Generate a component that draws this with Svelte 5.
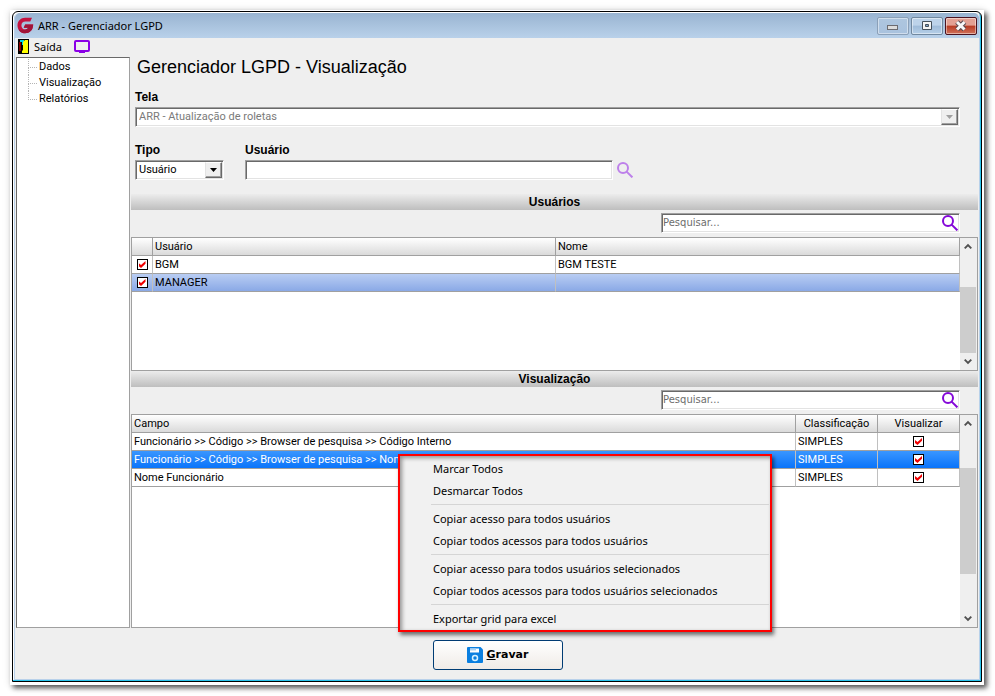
<script lang="ts">
  type Profile = { login: string; name: string; checked: boolean };
  type Field = { path: string; kind: string; visible: boolean };

  const screens = ['ARR - Atualização de roletas'];
  const treeItems = ['Dados', 'Visualização', 'Relatórios'];

  let type = $state('Usuário');
  let userFilter = $state('');
  let selectedUser = $state(1);
  let selectedField = $state(1);

  let users: Profile[] = $state([
    { login: 'BGM', name: 'BGM TESTE', checked: true },
    { login: 'MANAGER', name: '', checked: true },
  ]);

  let fields: Field[] = $state([
    {
      path: 'Funcionário >> Código >> Browser de pesquisa >> Código Interno',
      kind: 'SIMPLES',
      visible: true,
    },
    {
      path: 'Funcionário >> Código >> Browser de pesquisa >> Nome',
      kind: 'SIMPLES',
      visible: true,
    },
    { path: 'Nome Funcionário', kind: 'SIMPLES', visible: true },
  ]);

  const menuGroups = [
    ['Marcar Todos', 'Desmarcar Todos'],
    ['Copiar acesso para todos usuários', 'Copiar todos acessos para todos usuários'],
    [
      'Copiar acesso para todos usuários selecionados',
      'Copiar todos acessos para todos usuários selecionados',
    ],
    ['Exportar grid para excel'],
  ];

  function runMenu(item: string) {
    if (item === 'Marcar Todos') fields.forEach((f) => (f.visible = true));
    if (item === 'Desmarcar Todos') fields.forEach((f) => (f.visible = false));
  }
</script>

{#snippet magnifier()}
  <svg class="magnifier" viewBox="0 0 16 16" aria-hidden="true">
    <circle cx="6" cy="6" r="5" />
    <path d="M9.6 9.6 15.4 15.4" />
  </svg>
{/snippet}

{#snippet scrollbar(name: string)}
  <div class="scrollbar {name}" aria-hidden="true">
    <svg viewBox="0 0 17 17"><path d="M5 10.5 8.5 7 12 10.5" /></svg>
    <span class="before"></span>
    <span class="thumb"></span>
    <span class="after"></span>
    <svg viewBox="0 0 17 17"><path d="M5 6.5 8.5 10 12 6.5" /></svg>
  </div>
{/snippet}

{#snippet search()}
  <div class="search-row">
    <div class="search">
      <input type="text" placeholder="Pesquisar..." aria-label="Pesquisar" />
      <button type="button" aria-label="Buscar">{@render magnifier()}</button>
    </div>
  </div>
{/snippet}

<div class="desktop">
  <div class="frame">
    <div class="window">
      <header class="titlebar">
        <svg class="logo" viewBox="0 0 17 17" aria-hidden="true">
          <path
            d="M15 .8H8C3.800.8.5 4.100.5 8.400S3.700 16.200 8 16.200c4.600 0 7.900-2.700 8.200-8.700H8.200L6.700 10.800h4.500c-.7 1.200-1.700 1.700-3.100 1.700-2.200 0-3.700-1.700-3.700-4s1.600-3.900 3.900-3.900h5z"
            fill="#c4123f"
          />
          <path d="M8.200 7.500h8c-.3 6-3.600 8.700-8.200 8.700-3 0-5.300-1.400-6.600-3.700 4.500 1.200 8.400.4 9.800-1.700H6.700z" fill="#a01438" />
        </svg>
        <span class="caption">ARR - Gerenciador LGPD</span>
        <div class="controls">
          <button type="button" class="dim" aria-label="Minimizar">
            <svg viewBox="0 0 14 12"><rect x="1.500" y="5.500" width="10" height="4" fill="#dcdcdc" stroke="#6b6b70" /></svg>
          </button>
          <button type="button" aria-label="Maximizar">
            <svg viewBox="0 0 14 12"><path d="M2.500 1.500h9v8h-9z" fill="#f4f4f4" stroke="#45505b" /><path d="M5.500 4.500h3v2h-3z" fill="#7ea3c8" stroke="#45505b" /></svg>
          </button>
          <button type="button" class="close" aria-label="Fechar">
            <svg viewBox="0 0 14 12">
              <path d="M3 2 10.500 9.500M10.500 2 3 9.500" stroke="#5a4a50" stroke-width="5" />
              <path d="M3 2 10.500 9.500M10.500 2 3 9.500" stroke="#f8f8f8" stroke-width="3" />
            </svg>
          </button>
        </div>
      </header>

      <nav class="toolbar" aria-label="Ferramentas">
        <button type="button">
          <svg class="door" viewBox="0 0 11 15" aria-hidden="true">
            <rect width="11" height="15" fill="#000" />
            <path d="M1 3h2v9H1z" fill="#8a0000" />
            <path d="M2 1h4v2H5v3H4V3H2z" fill="#00d8e8" />
            <path d="M5 3 7 1h3v13H4v-2l1-1z" fill="#ff0" />
          </svg>
          Saída
        </button>
        <button type="button" aria-label="Tela">
          <svg class="monitor" viewBox="0 0 16 13" aria-hidden="true">
            <rect x="1" y="1" width="14" height="10" rx="1" fill="none" stroke="#8a00e6" stroke-width="2" />
            <path d="M5 12h6" stroke="#8a00e6" stroke-width="2" />
          </svg>
        </button>
      </nav>

      <div class="workspace">
        <aside class="tree">
          <ul>
            {#each treeItems as item}
              <li><a href="#{item}">{item}</a></li>
            {/each}
          </ul>
        </aside>

        <main>
          <div class="form">
            <h1>Gerenciador LGPD - Visualização</h1>

            <label class="field-label" for="screen">Tela</label>
            <div class="combo">
              <select id="screen" disabled>
                {#each screens as screen}
                  <option>{screen}</option>
                {/each}
              </select>
              <span class="drop"><svg viewBox="0 0 7 4"><path d="M0 0h7L3.500 4z" /></svg></span>
            </div>

            <div class="filters">
              <div class="type">
                <label class="field-label" for="type">Tipo</label>
                <div class="combo">
                  <select id="type" bind:value={type}>
                    <option>Usuário</option>
                    <option>Grupo</option>
                  </select>
                  <span class="drop"><svg viewBox="0 0 7 4"><path d="M0 0h7L3.500 4z" /></svg></span>
                </div>
              </div>
              <div class="user">
                <label class="field-label" for="user">Usuário</label>
                <div class="user-row">
                  <input id="user" type="text" bind:value={userFilter} />
                  <button type="button" aria-label="Pesquisar usuário">{@render magnifier()}</button>
                </div>
              </div>
            </div>
          </div>

          <h2>Usuários</h2>
          {@render search()}
          <section class="grid users">
            <div class="sheet">
              <table>
                <thead>
                  <tr>
                    <th class="tick" aria-label="Selecionado"></th>
                    <th class="login">Usuário</th>
                    <th>Nome</th>
                  </tr>
                </thead>
                <tbody>
                  {#each users as user, i}
                    <tr class:marked={i === selectedUser} onclick={() => (selectedUser = i)}>
                      <td class="tick">
                        <input type="checkbox" aria-label={user.login} bind:checked={user.checked} />
                      </td>
                      <td>{user.login}</td>
                      <td>{user.name}</td>
                    </tr>
                  {/each}
                </tbody>
              </table>
            </div>
            {@render scrollbar('lower')}
          </section>

          <h2>Visualização</h2>
          {@render search()}
          <section class="grid fields">
            <div class="sheet">
              <table>
                <thead>
                  <tr>
                    <th>Campo</th>
                    <th class="narrow">Classificação</th>
                    <th class="narrow">Visualizar</th>
                  </tr>
                </thead>
                <tbody>
                  {#each fields as field, i}
                    <tr class:active={i === selectedField} onclick={() => (selectedField = i)}>
                      <td>{field.path}</td>
                      <td>{field.kind}</td>
                      <td class="tick">
                        <input type="checkbox" aria-label="Visualizar {field.path}" bind:checked={field.visible} />
                      </td>
                    </tr>
                  {/each}
                </tbody>
              </table>
            </div>
            {@render scrollbar('middle')}

            <div class="menu" role="menu">
              {#each menuGroups as group}
                <div class="group" role="group">
                  {#each group as item}
                    <button type="button" role="menuitem" onclick={() => runMenu(item)}>{item}</button>
                  {/each}
                </div>
              {/each}
            </div>
          </section>
        </main>
      </div>

      <footer>
        <button type="button" class="save">
          <svg viewBox="0 0 16 16" aria-hidden="true">
            <path d="M0 1q0-1 1-1h12.500L16 2.500V15q0 1-1 1H1q-1 0-1-1z" fill="#0b7fe0" />
            <path d="M3 1.500h9v4H3z" fill="#fff" />
            <path d="M3 1.500h6v2H3z" fill="#a9d2f5" />
            <circle cx="8" cy="11" r="2.500" fill="none" stroke="#d8f2ff" stroke-width="1.500" />
          </svg>
          <span><u>G</u>ravar</span>
        </button>
      </footer>
    </div>
  </div>
</div>

<style>
  :global(body) {
    margin: 0;
    background: #fff;
  }

  .desktop {
    box-sizing: border-box;
    display: flex;
    min-height: 100vh;
    padding: 10px 11px 11px 10px;
    color: #000;
    font: 11px/16px Roboto, 'Liberation Sans', sans-serif;
  }

  .desktop * {
    box-sizing: border-box;
  }

  button,
  input,
  select {
    margin: 0;
    padding: 0;
    border: 0;
    background: none;
    color: inherit;
    font: inherit;
  }

  .frame {
    display: flex;
    flex: 1;
    padding: 1px 2px 3px;
    background: #fff;
    box-shadow:
      0 0 8px rgb(0 0 0 / 12%),
      3px 3px 5px rgb(0 0 0 / 65%);
  }

  .window {
    display: flex;
    flex: 1;
    flex-direction: column;
    min-width: 0;
    padding: 0 1px 1px 2px;
    background: #efefef;
    border: 1px solid #000;
    border-radius: 6px 6px 0 0;
    box-shadow:
      inset -1px -1px #28c4ec,
      inset 1px 1px #fff,
      inset -2px -2px #b9d1ea,
      inset 2px 0 #b9d1ea;
  }

  .titlebar {
    display: flex;
    gap: 4px;
    align-items: center;
    height: 25px;
    margin: 1px 1px 0 0;
    padding: 0 2px;
    background: linear-gradient(#99b4d1, #b9d1ea);
    border-radius: 5px 5px 0 0;
  }

  .logo {
    width: 17px;
    height: 17px;
  }

  .caption,
  .toolbar,
  .menu {
    font-family: 'Noto Sans', 'Open Sans', sans-serif;
  }

  .controls {
    display: flex;
    gap: 2px;
    margin-left: auto;
  }

  .controls button {
    display: grid;
    place-items: center;
    width: 32px;
    height: 18px;
    background: linear-gradient(#bdd3ea 45%, #9fbbd9 50%, #b6cfe8);
    border: 1px solid #71889f;
    border-radius: 2px;
    box-shadow: inset 0 0 0 1px rgb(255 255 255 / 45%);
  }

  .controls svg {
    width: 14px;
    height: 12px;
  }

  .controls .dim {
    background: linear-gradient(#aec6df, #a9c2de);
    border-color: #8ba0b8;
  }

  .controls .close {
    background: linear-gradient(#e3a093 45%, #b83a22 50%, #d0725c);
    border-color: #4b1220;
  }

  .toolbar {
    display: flex;
    gap: 12px;
    align-items: center;
    height: 19px;
    padding: 0 3px 2px;
  }

  .toolbar button {
    display: flex;
    gap: 5px;
    align-items: center;
  }

  .door {
    width: 11px;
    height: 15px;
  }

  .monitor {
    width: 16px;
    height: 13px;
  }

  .workspace {
    display: flex;
    flex: 1;
    gap: 1px;
    padding: 0 2px 0 1px;
  }

  .tree {
    flex: none;
    width: 114px;
    background: #fff;
    border: 1px solid #a0a0a0;
    border-color: #696969 #a0a0a0 #a0a0a0 #696969;
  }

  .tree ul {
    margin: 1px 0 0 11px;
    padding: 0;
    list-style: none;
  }

  .tree li {
    position: relative;
    padding-left: 11px;
  }

  .tree li::before {
    position: absolute;
    top: 0;
    left: 0;
    width: 8px;
    height: 8px;
    border: dotted #b4b4b4;
    border-width: 0 0 1px 1px;
    content: '';
  }

  .tree li:not(:last-child)::after {
    position: absolute;
    top: 8px;
    left: 0;
    height: 8px;
    border-left: 1px dotted #b4b4b4;
    content: '';
  }

  .tree a {
    color: inherit;
    text-decoration: none;
  }

  main {
    display: flex;
    flex: 1;
    flex-direction: column;
    min-width: 0;
  }

  h1,
  h2,
  .field-label {
    font-family: 'Liberation Sans', Arial, sans-serif;
  }

  .form {
    padding: 0 18px 14px 4px;
  }

  h1 {
    margin: 0 0 12px;
    padding-left: 2px;
    font-size: 18px;
    font-weight: 400;
    line-height: 20px;
  }

  .field-label {
    display: block;
    height: 18px;
    font-size: 12px;
    font-weight: 700;
  }

  .combo,
  .user input,
  .search {
    height: 20px;
    padding: 1px;
    background: #fff;
    border: 1px solid #a0a0a0;
    border-color: #a0a0a0 #fff #fff #a0a0a0;
    box-shadow:
      inset 1px 1px #696969,
      inset -1px -1px #e3e3e3;
  }

  .combo {
    display: flex;
  }

  .combo select {
    flex: 1;
    min-width: 0;
    padding-left: 2px;
    appearance: none;
    opacity: 1;
  }

  .combo select:disabled {
    color: #7a7a7a;
  }

  .drop {
    display: grid;
    flex: none;
    place-items: center;
    width: 17px;
    background: #efefef;
    border: 1px solid #fff;
    border-color: #fff #696969 #696969 #e3e3e3;
    box-shadow: inset -1px -1px #a0a0a0;
    pointer-events: none;
  }

  .drop svg {
    width: 7px;
    height: 4px;
  }

  select:disabled + .drop {
    fill: #a0a0a0;
  }

  .filters {
    display: flex;
    gap: 21px;
    margin-top: 15px;
  }

  .type {
    width: 89px;
  }

  .user {
    width: 47%;
  }

  .user-row {
    display: flex;
    gap: 4px;
    align-items: center;
  }

  .user input {
    flex: 1;
    min-width: 0;
  }

  .magnifier {
    display: block;
    width: 16px;
    height: 16px;
    fill: none;
    stroke: #8408d8;
    stroke-width: 2;
  }

  .user .magnifier {
    stroke: #bd80ea;
  }

  h2 {
    height: 16px;
    margin: 0;
    background: linear-gradient(#ececec, #bebebe);
    font-size: 12px;
    line-height: 17px;
    text-align: center;
  }

  .search-row {
    display: flex;
    justify-content: flex-end;
    padding: 3px 18px 4px 0;
  }

  .search {
    display: flex;
    width: 299px;
  }

  .search input {
    flex: 1;
    min-width: 0;
    font-family: 'DejaVu Sans', sans-serif;
    font-size: 10px;
  }

  .search input::placeholder {
    color: #6d6d6d;
    opacity: 1;
  }

  .grid {
    position: relative;
    display: flex;
    background: #fff;
    border: 1px solid #a0a0a0;
  }

  .users {
    height: 134px;
  }

  .fields {
    flex: 1;
  }

  .sheet {
    flex: 1;
    min-width: 0;
  }

  table {
    width: 100%;
    border-collapse: separate;
    border-spacing: 0;
    table-layout: fixed;
  }

  th,
  td {
    height: 18px;
    padding: 0 2px;
    overflow: hidden;
    border: solid #a0a0a0;
    border-width: 0 1px 1px 0;
    font-weight: 400;
    line-height: 16px;
    text-align: left;
    white-space: nowrap;
  }

  td {
    border-right-color: #c0c0c0;
  }

  th {
    background: linear-gradient(#fff, #dadada);
  }

  th.tick {
    width: 21px;
  }

  th.login {
    width: 403px;
  }

  th.narrow {
    width: 82px;
    text-align: center;
  }

  td.tick {
    text-align: center;
  }

  .marked td {
    background: linear-gradient(#b9cdf3, #8aa9e6);
  }

  .active td {
    background: linear-gradient(#3a96ff, #0a74fa);
    color: #fff;
  }

  input[type='checkbox'] {
    position: relative;
    display: block;
    width: 11px;
    height: 11px;
    margin: 0 auto;
    appearance: none;
    background: #fff;
    border: 1px solid #000;
  }

  input[type='checkbox']:checked::after {
    display: block;
    width: 7px;
    height: 7px;
    margin: 1px;
    background: #f00000;
    clip-path: polygon(0 30%, 36% 58%, 100% 0, 100% 40%, 36% 100%, 0 72%);
    content: '';
  }

  .scrollbar {
    display: flex;
    flex: none;
    flex-direction: column;
    width: 17px;
    padding-right: 1px;
    background: #efefef;
  }

  .scrollbar svg {
    flex: none;
    width: 16px;
    height: 17px;
    fill: none;
    stroke: #505050;
    stroke-width: 2;
  }

  .thumb {
    background: #cdcdcd;
  }

  .lower .before {
    flex: 32;
  }

  .lower .thumb {
    flex: 65;
  }

  .middle .before,
  .middle .after {
    flex: 36;
  }

  .middle .thumb {
    flex: 107;
  }

  .menu {
    position: absolute;
    top: 39px;
    left: 266px;
    width: 374px;
    padding: 2px 1px 0 0;
    background: #f1f1f1;
    border: 2px solid #f00;
    box-shadow:
      2px 3px 4px rgb(0 0 0 / 55%),
      inset 2px 2px 4px rgb(0 0 0 / 40%);
  }

  .group {
    margin-left: 31px;
  }

  .group + .group {
    margin-top: 2px;
    padding-top: 3px;
    border-top: 1px solid #d5d5d5;
  }

  .menu button {
    display: block;
    width: 100%;
    height: 22px;
    padding-left: 2px;
    text-align: left;
    white-space: nowrap;
  }

  footer {
    display: flex;
    justify-content: center;
    padding: 12px 0 10px;
  }

  .save {
    display: flex;
    gap: 4px;
    align-items: center;
    justify-content: center;
    width: 130px;
    height: 30px;
    background: linear-gradient(#fff, #f0ebe7);
    border: 1px solid #003c74;
    border-radius: 3px;
    font-family: 'DejaVu Sans', sans-serif;
    font-size: 11px;
    font-weight: 700;
  }

  .save svg {
    width: 16px;
    height: 16px;
  }
</style>
